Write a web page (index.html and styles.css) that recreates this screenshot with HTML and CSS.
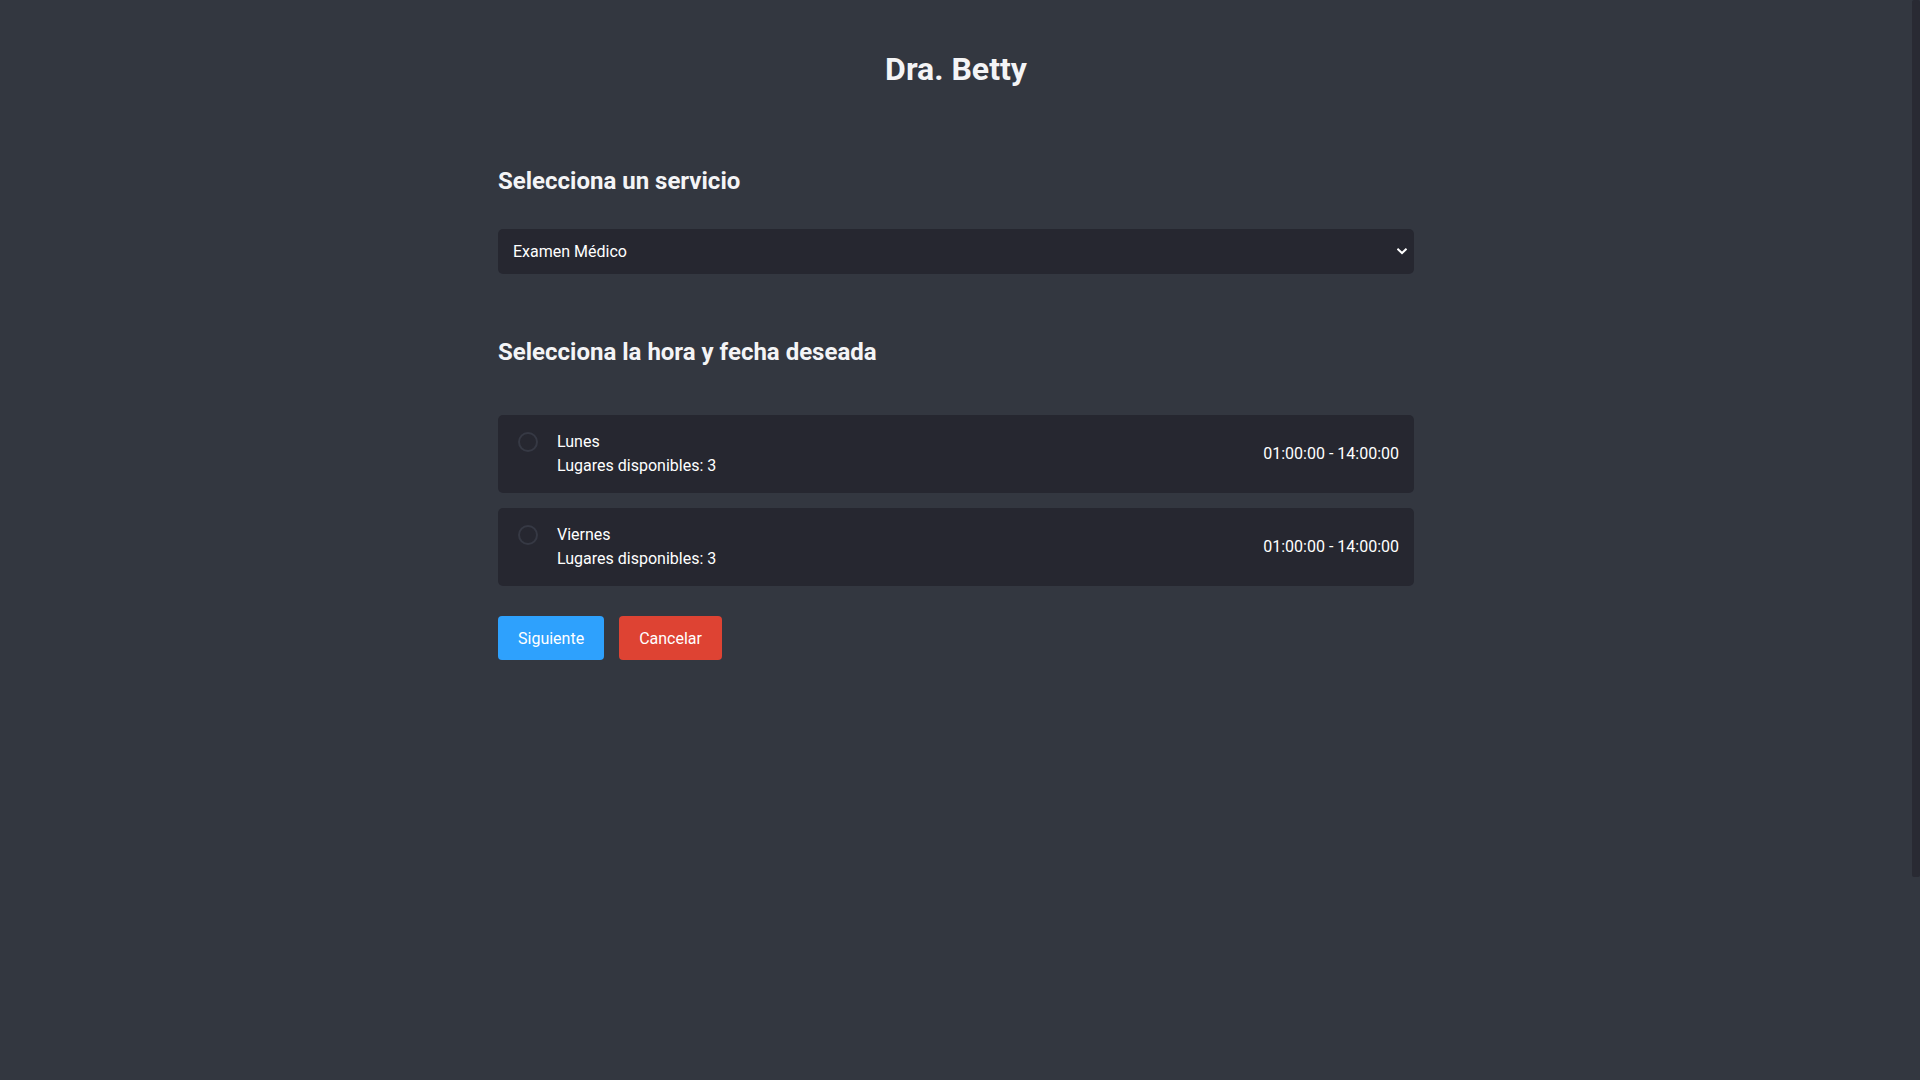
FILE: index.html
```html
<!DOCTYPE html>
<html lang="es">
<head>
<meta charset="utf-8">
<title>Dra. Betty</title>
<link rel="stylesheet" href="styles.css">
</head>
<body>
<main class="page">
  <h1 class="title">Dra. Betty</h1>

  <h2 class="section-title first">Selecciona un servicio</h2>
  <div class="select-wrap">
    <select class="select">
      <option>Examen Médico</option>
    </select>
    <svg class="chevron" width="10" height="7" viewBox="0 0 10 7" aria-hidden="true">
      <path d="M1.2 1.4 L5 5 L8.8 1.4" fill="none" stroke="#ffffff" stroke-width="2" stroke-linecap="square"/>
    </svg>
  </div>

  <h2 class="section-title second">Selecciona la hora y fecha deseada</h2>
  <div class="slots">
    <label class="slot">
      <span class="radio"></span>
      <span class="slot-info">
        <span class="slot-day">Lunes</span>
        <span class="slot-places">Lugares disponibles: 3</span>
      </span>
      <span class="slot-time">01:00:00 - 14:00:00</span>
    </label>
    <label class="slot">
      <span class="radio"></span>
      <span class="slot-info">
        <span class="slot-day">Viernes</span>
        <span class="slot-places">Lugares disponibles: 3</span>
      </span>
      <span class="slot-time">01:00:00 - 14:00:00</span>
    </label>
  </div>

  <div class="actions">
    <button class="btn btn-primary" type="button">Siguiente</button>
    <button class="btn btn-danger" type="button">Cancelar</button>
  </div>
</main>
<div class="scrollbar" aria-hidden="true"><div class="scrollbar-thumb"></div></div>
</body>
</html>
```

FILE: styles.css
```css
html {
  background: #333740;
}

body {
  margin: 0;
  padding-right: 8px;
  background: #333740;
  color: #ffffff;
  font-family: Roboto, "Noto Sans", Arial, sans-serif;
}

.scrollbar {
  position: fixed;
  top: 0;
  right: 0;
  width: 8px;
  height: 100vh;
  background: #333740;
}

.scrollbar-thumb {
  width: 8px;
  height: 877px;
  background: #292a33;
  border-radius: 2px;
}

.page {
  width: 916px;
  margin: 0 auto;
  padding-top: 50px;
}

.title {
  margin: 0;
  font-size: 32px;
  line-height: 38px;
  font-weight: 700;
  text-align: center;
  color: #f4f4f6;
}

.section-title {
  margin: 0;
  font-size: 24px;
  line-height: 28px;
  font-weight: 700;
  color: #f4f4f6;
}

.section-title.first {
  margin-top: 79px;
  margin-bottom: 34px;
}

.section-title.second {
  margin-top: 64px;
  margin-bottom: 49px;
}

.select-wrap {
  position: relative;
  height: 45px;
  background: #262730;
  border-radius: 5px;
}

.select {
  display: block;
  width: 100%;
  height: 45px;
  padding: 0 15px;
  border: none;
  outline: none;
  background: transparent;
  color: #ffffff;
  font-family: Roboto, "Noto Sans", Arial, sans-serif;
  font-size: 16px;
  -webkit-appearance: none;
  appearance: none;
}

.chevron {
  position: absolute;
  right: 7px;
  top: 19px;
  pointer-events: none;
}

.slots {
  display: flex;
  flex-direction: column;
  gap: 15px;
}

.slot {
  display: flex;
  align-items: center;
  padding: 15px 15px 15px 20px;
  background: #262730;
  border-radius: 5px;
  font-size: 16px;
  line-height: 24px;
}

.radio {
  align-self: flex-start;
  flex: none;
  width: 20px;
  height: 20px;
  margin-top: 2px;
  box-sizing: border-box;
  border: 2px solid #363944;
  border-radius: 50%;
}

.slot-info {
  display: flex;
  flex-direction: column;
  margin-left: 19px;
  flex: 1;
}

.slot-time {
  flex: none;
}

.actions {
  display: flex;
  gap: 15px;
  margin-top: 30px;
}

.btn {
  height: 44px;
  padding: 0 20px;
  border: none;
  border-radius: 4px;
  color: #ffffff;
  font-family: Roboto, "Noto Sans", Arial, sans-serif;
  font-size: 16px;
  cursor: pointer;
}

.btn-primary {
  background: #2ea1fd;
}

.btn-danger {
  background: #de4333;
}
```
